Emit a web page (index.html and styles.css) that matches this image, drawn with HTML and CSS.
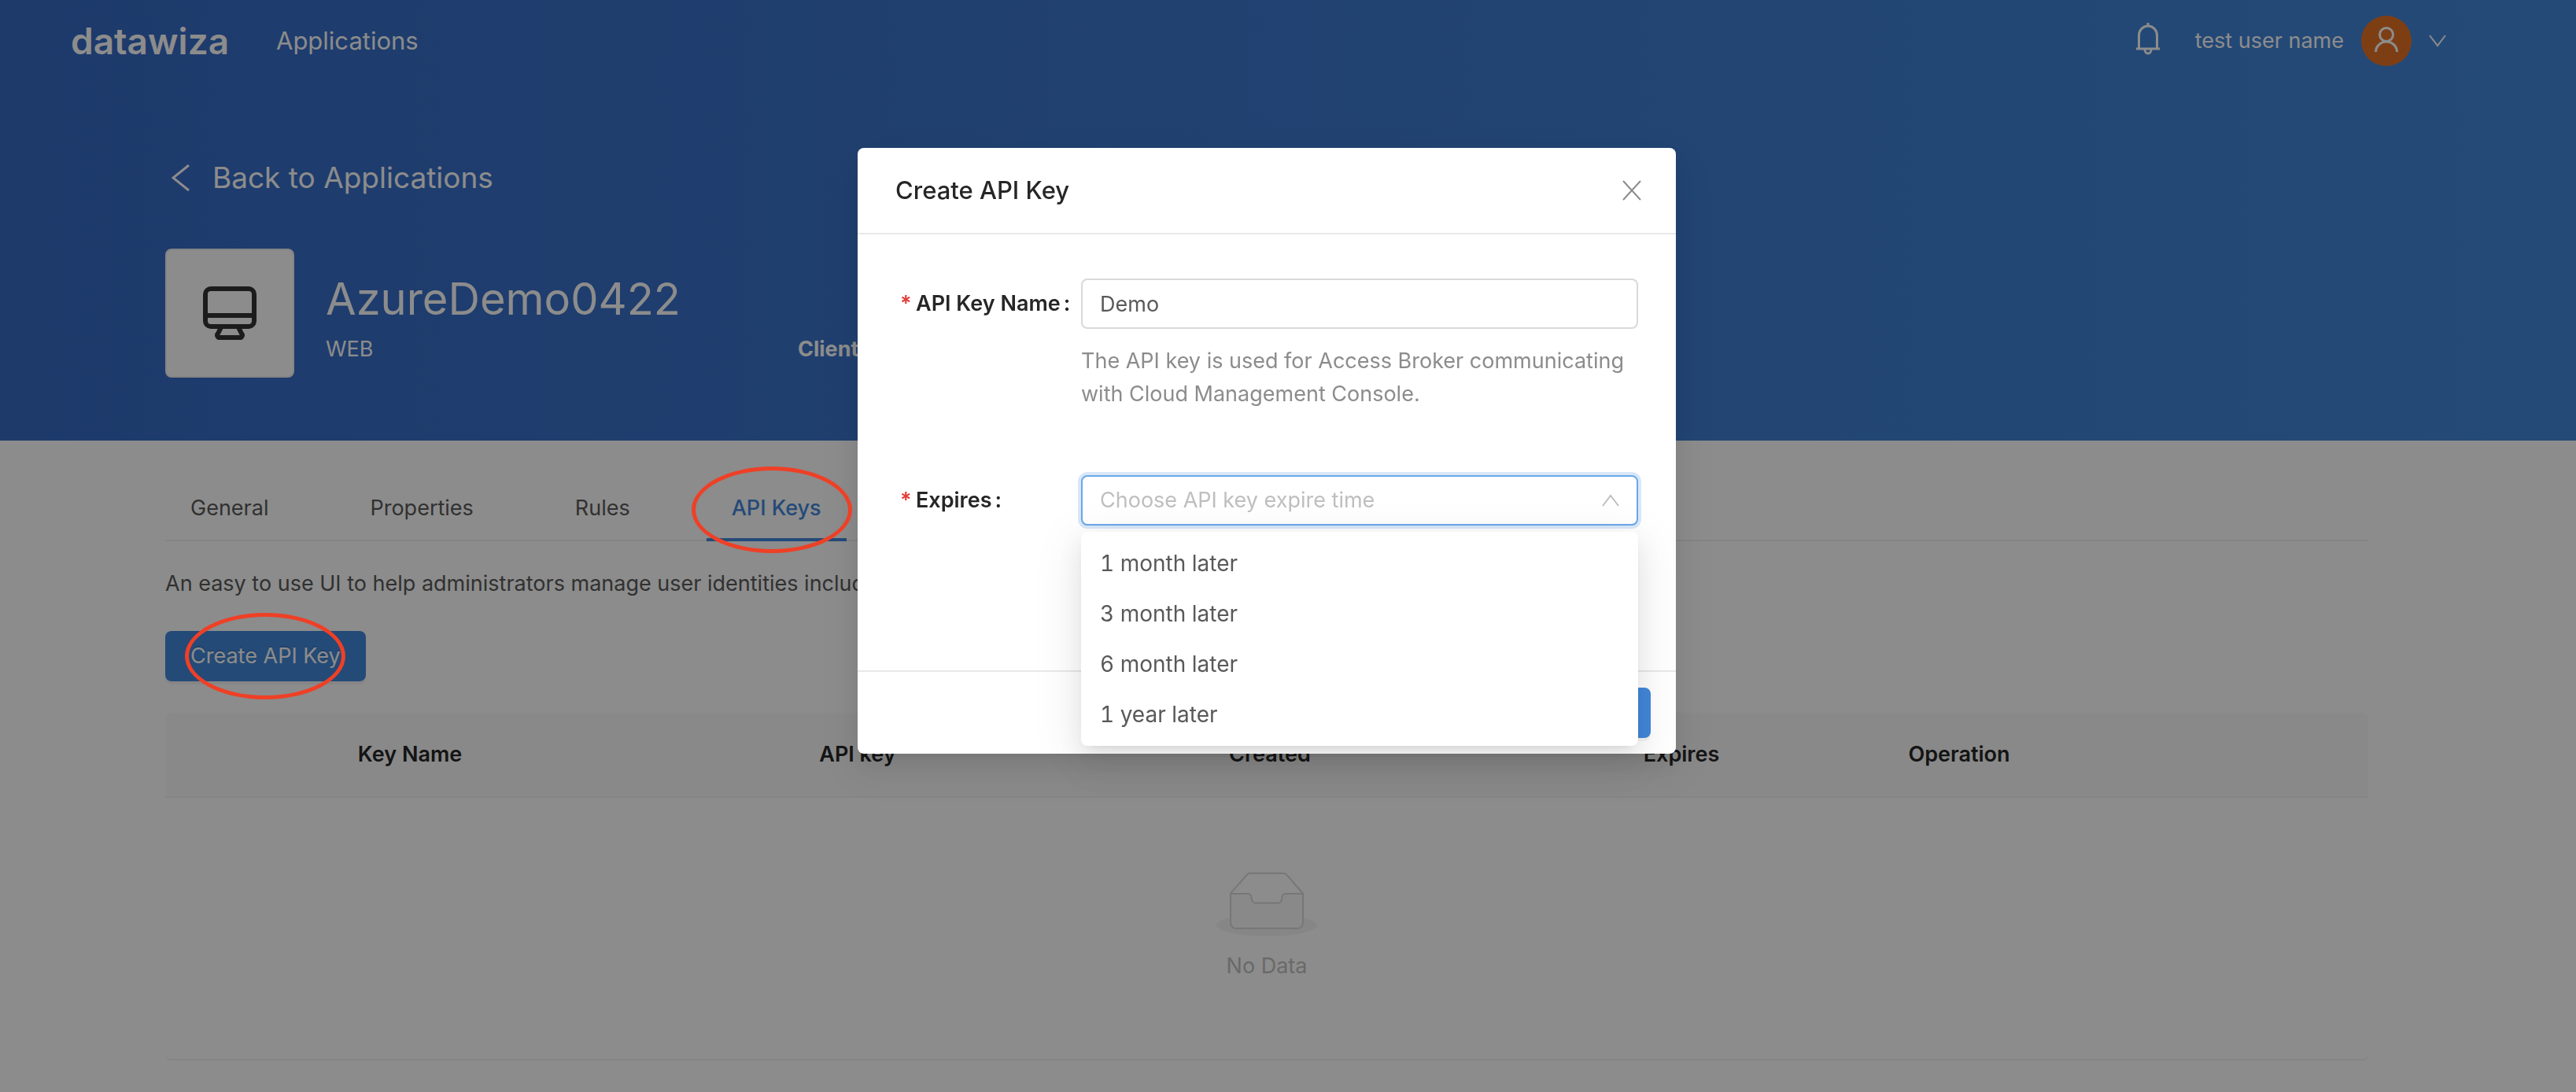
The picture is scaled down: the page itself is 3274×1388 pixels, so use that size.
FILE: index.html
```html
<!DOCTYPE html>
<html lang="en">
<head>
<meta charset="utf-8">
<title>API Keys</title>
<link rel="stylesheet" href="styles.css">
</head>
<body>
<header class="hero">
  <nav class="navbar">
    <a class="logo" href="#">datawiza</a>
    <a class="nav-link" href="#">Applications</a>
    <div class="user">
      <svg class="bell" width="32" height="42" viewBox="0 0 32 42" fill="none" stroke="currentColor" stroke-width="3"><path d="M16 1v5M4.500 34V17a11.500 12 0 0 1 23 0v17M1 34h30" /><path d="M12 35a4 5 0 0 0 8 0"/></svg>
      <span>test user name</span>
      <span class="avatar"><svg width="34" height="36" viewBox="0 0 34 36" fill="none" stroke="currentColor" stroke-width="3"><circle cx="17" cy="12" r="8.500"/><path d="M3.500 34a13.500 13 0 0 1 27 0"/></svg></span>
      <svg class="caret" width="22" height="16" viewBox="0 0 22 16" fill="none" stroke="currentColor" stroke-width="2"><path d="M1 1l10 13L21 1"/></svg>
    </div>
  </nav>
  <div class="hero-body">
    <a class="back" href="#"><svg width="24" height="36" viewBox="0 0 24 36" fill="none" stroke="currentColor" stroke-width="3"><path d="M22 2L2 18l20 16"/></svg>Back to Applications</a>
    <div class="app">
      <div class="app-icon"><svg width="68" height="68" viewBox="0 0 68 68" fill="none" stroke="currentColor" stroke-width="6" stroke-linejoin="round"><rect x="3" y="3" width="62" height="48" rx="7"/><path d="M3 37h62M23 52l-4 8a3 3 0 0 0 3 5h24a3 3 0 0 0 3-5l-4-8"/></svg></div>
      <div class="app-name"><h1>AzureDemo0422</h1><p>WEB</p></div>
      <div class="app-client">Client ID:</div>
    </div>
  </div>
</header>
<main class="content">
  <nav class="tabs">
    <a class="tab" href="#">General</a>
    <a class="tab" href="#">Properties</a>
    <a class="tab" href="#">Rules</a>
    <a class="tab active marked" href="#">API Keys</a>
  </nav>
  <p class="intro">An easy to use UI to help administrators manage user identities including</p>
  <button class="btn create marked" type="button">Create API Key</button>
  <table class="keys">
    <colgroup><col class="c-name"><col class="c-key"><col class="c-created"><col class="c-expires"><col class="c-op"><col class="c-rest"></colgroup>
    <thead><tr><th>Key Name</th><th>API key</th><th>Created</th><th>Expires</th><th>Operation</th><th></th></tr></thead>
    <tbody><tr><td colspan="6">
      <svg class="empty" width="128" height="82" viewBox="0 0 64 41"><g transform="translate(0 1)" fill="none" fill-rule="evenodd"><ellipse fill="#f5f5f5" cx="32" cy="33" rx="32" ry="7"/><g fill-rule="nonzero" stroke="#d9d9d9"><path d="M55 12.760L44.854 1.258C44.367.474 43.656 0 42.907 0H21.093c-.749 0-1.460.474-1.947 1.257L9 12.761V22h46v-9.240z"/><path d="M41.613 15.931c0-1.605.994-2.930 2.227-2.931H55v18.137C55 33.260 53.680 35 52.050 35h-40.100C10.320 35 9 33.259 9 31.137V13h11.160c1.233 0 2.227 1.323 2.227 2.928v.022c0 1.605 1.005 2.901 2.237 2.901h14.752c1.232 0 2.237-1.308 2.237-2.913v-.007z" fill="#fafafa"/></g></g></svg>
      <p class="no-data">No Data</p>
    </td></tr></tbody>
  </table>
</main>
<div class="overlay">
  <section class="modal" role="dialog" aria-labelledby="dialog-title">
    <header class="modal-head">
      <h2 id="dialog-title">Create API Key</h2>
      <button class="close" type="button" aria-label="Close"><svg width="24" height="26" viewBox="0 0 24 26" fill="none" stroke="currentColor" stroke-width="2"><path d="M1 1l22 24M23 1L1 25"/></svg></button>
    </header>
    <form class="form">
      <label class="label" for="key-name"><span class="star">*</span>API Key Name<span class="colon">:</span></label>
      <div class="field">
        <input class="control" id="key-name" type="text" value="Demo">
        <p class="help">The API key is used for Access Broker communicating with Cloud Management Console.</p>
      </div>
      <label class="label" for="expires"><span class="star">*</span>Expires<span class="colon">:</span></label>
      <div class="field">
        <select class="control open" id="expires">
          <option>Choose API key expire time</option>
          <option>1 month later</option>
          <option>3 month later</option>
          <option>6 month later</option>
          <option>1 year later</option>
        </select>
        <svg class="arrow" width="22" height="16" viewBox="0 0 22 16" fill="none" stroke="currentColor" stroke-width="2"><path d="M1 15L11 2l10 13"/></svg>
        <ul class="menu">
          <li>1 month later</li>
          <li>3 month later</li>
          <li>6 month later</li>
          <li>1 year later</li>
        </ul>
      </div>
    </form>
    <footer class="modal-foot"><button class="btn" type="submit">Create</button></footer>
  </section>
</div>
</body>
</html>
```
FILE: styles.css
```css
*, *::after { box-sizing: border-box; }
body, h1, h2, p, ul { margin: 0; padding: 0; }
body {
  font: 27px/44px Inter, "Noto Sans", sans-serif;
  color: #595959;
  background: #fff;
  min-height: 100vh;
}
a { color: inherit; text-decoration: none; }
button, input, select { font: inherit; }
svg { display: block; flex: none; }

/* Hero */
.hero { background: linear-gradient(90deg, #366ac4, #4388da); color: #fff; }
.navbar { display: flex; align-items: center; height: 104px; padding: 0 165px 0 90px; }
.logo { width: 261px; font-size: 46px; font-weight: 600; }
.nav-link { font-size: 31px; }
.user { display: flex; align-items: center; margin-left: auto; }
.bell { margin-right: 44px; margin-bottom: 6px; }
.avatar {
  display: flex; align-items: center; justify-content: center;
  width: 64px; height: 64px; margin: 0 22px; padding-bottom: 4px;
  border-radius: 50%; background: #e67225;
}
.hero-body { padding: 100px 264px 80px 210px; }
.back { display: flex; align-items: center; gap: 28px; padding-left: 8px; font-size: 37px; }
.app { display: flex; align-items: flex-end; margin-top: 68px; }
.app-icon {
  display: flex; align-items: center; justify-content: center;
  width: 164px; height: 164px;
  border: 2px solid #f0f0f0; border-radius: 8px;
  background: #fff; color: #333;
}
.app-name { width: 600px; margin-left: 40px; padding-bottom: 14px; }
.app-name h1 { margin-bottom: 8px; font-size: 56px; line-height: 68px; font-weight: 400; }
.app-client { padding-bottom: 14px; font-weight: 700; }

/* Page content */
.content { padding: 40px 264px 40px 210px; }
.tabs { display: flex; gap: 65px; box-shadow: inset 0 -2px #f0f0f0; }
.tab { padding: 24px 32px 20px; }
.tab.active { color: #4388da; font-weight: 500; box-shadow: inset 0 -4px #4388da; }
.intro { margin: 32px 0 38px; }
.btn {
  display: block; height: 64px; padding: 0 32px;
  border: 0; border-radius: 8px; background: #4388da; color: #fff;
  box-shadow: 0 4px 0 rgba(0, 0, 0, .045);
  text-shadow: 0 -2px 0 rgba(0, 0, 0, .12);
}

/* Red ring drawn round a highlighted control, above the overlay */
.marked { position: relative; }
.marked::after {
  content: ""; position: absolute; z-index: 20;
  left: 50%; top: 50%; width: 204px; height: 110px;
  transform: translate(-50%, -50%);
  border: 5px solid #ee4026; border-radius: 50%;
}
.tab.marked::after { left: 47%; top: 54%; }
.keys { width: 100%; margin-top: 40px; border-collapse: separate; border-spacing: 0; table-layout: fixed; text-align: center; }
.c-name { width: 622px; }
.c-key { width: 516px; }
.c-created { width: 532px; }
.c-expires { width: 514px; }
.c-op { width: 192px; }
.c-rest { width: 424px; }
.keys th { height: 108px; padding: 0; border-bottom: 2px solid #f0f0f0; background: #fafafa; color: #262626; font-weight: 600; }
.keys th:first-child { border-top-left-radius: 8px; }
.keys th:last-child { border-top-right-radius: 8px; }
.keys td { padding: 94px 0 96px; border-bottom: 2px solid #f0f0f0; border-radius: 0 0 8px 8px; }
.empty { margin: 0 auto 16px; }
.no-data { color: #bfbfbf; }

/* Dialog */
.overlay { position: fixed; inset: 0; z-index: 10; padding: 188px 54px 0 0; background: rgba(0, 0, 0, .45); }
.modal {
  width: 1040px; margin: 0 auto; border-radius: 8px; background: #fff;
  box-shadow: 0 6px 12px -8px rgba(0, 0, 0, .12), 0 12px 32px rgba(0, 0, 0, .08), 0 18px 56px 16px rgba(0, 0, 0, .05);
}
.modal-head { display: flex; align-items: center; justify-content: space-between; padding: 32px 44px 32px 48px; border-bottom: 2px solid #e8e8e8; }
.modal-head h2 { color: #262626; font-size: 31px; line-height: 44px; font-weight: 500; }
.close { padding: 0; border: 0; background: none; color: #8c8c8c; }
.form { display: grid; grid-template-columns: 236px 1fr; row-gap: 82px; padding: 56px 48px 184px; }
.label { display: flex; align-items: center; height: 64px; padding-left: 6px; color: #262626; font-weight: 600; }
.star { width: 20px; color: #e53935; }
.colon { margin-left: 4px; }
.field { position: relative; }
.control {
  display: block; width: 100%; height: 64px; padding: 0 22px;
  border: 2px solid #d9d9d9; border-radius: 8px; outline: 0;
  background: #fff; color: #595959; appearance: none;
}
.control.open { border-color: #6aa8e8; color: #bfbfbf; box-shadow: 0 0 0 4px #d9e7f8; }
.help { margin-top: 20px; line-height: 42px; color: #8c8c8c; }
.arrow { position: absolute; right: 24px; top: 24px; color: #bfbfbf; }
.menu {
  position: absolute; left: 0; right: 0; top: 72px; padding: 8px 0;
  border-radius: 8px; background: #fff; list-style: none;
  font-variant-numeric: tabular-nums;
  box-shadow: 0 6px 12px -8px rgba(0, 0, 0, .12), 0 12px 32px rgba(0, 0, 0, .08), 0 18px 56px 16px rgba(0, 0, 0, .05);
}
.menu li { padding: 10px 24px; font-size: 28px; }
.modal-foot { display: flex; justify-content: flex-end; padding: 20px 32px; border-top: 2px solid #e8e8e8; }
```
